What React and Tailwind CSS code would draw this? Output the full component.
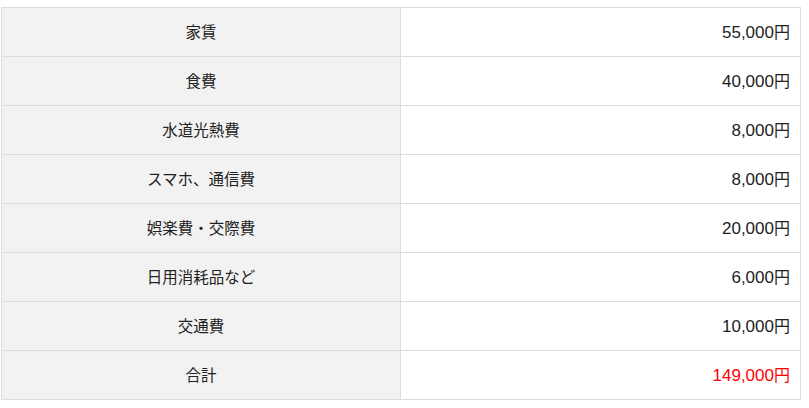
const rows = [
  { label: "家賃", amount: "55,000" },
  { label: "食費", amount: "40,000" },
  { label: "水道光熱費", amount: "8,000" },
  { label: "スマホ、通信費", amount: "8,000" },
  { label: "娯楽費・交際費", amount: "20,000" },
  { label: "日用消耗品など", amount: "6,000" },
  { label: "交通費", amount: "10,000" },
  { label: "合計", amount: "149,000", total: true },
];

export default function App() {
  return (
    <div className="w-[809px] h-[408px] bg-white pt-[7px] pl-[1px]">
      <table className="w-[800px] border-collapse table-fixed text-[#222]">
        <tbody>
          {rows.map((r) => (
            <tr key={r.label} className="h-[49px]">
              <td
                className="w-[399px] border border-[#dddddd] bg-[#f2f2f2] text-center text-[15.5px] p-0"
                style={{ fontFamily: '"Noto Sans CJK JP", "Noto Sans", sans-serif' }}
              >
                {r.label}
              </td>
              <td
                className={`border border-[#dddddd] bg-white text-right pr-[10px] text-[17px] ${
                  r.total ? "text-[#ff0000]" : ""
                }`}
                style={{ fontFamily: '"Liberation Sans", "Noto Sans CJK JP", sans-serif' }}
              >
                {r.amount}
                <span style={{ fontFamily: '"Noto Sans CJK JP", sans-serif' }} className="text-[16px]">円</span>
              </td>
            </tr>
          ))}
        </tbody>
      </table>
    </div>
  );
}
